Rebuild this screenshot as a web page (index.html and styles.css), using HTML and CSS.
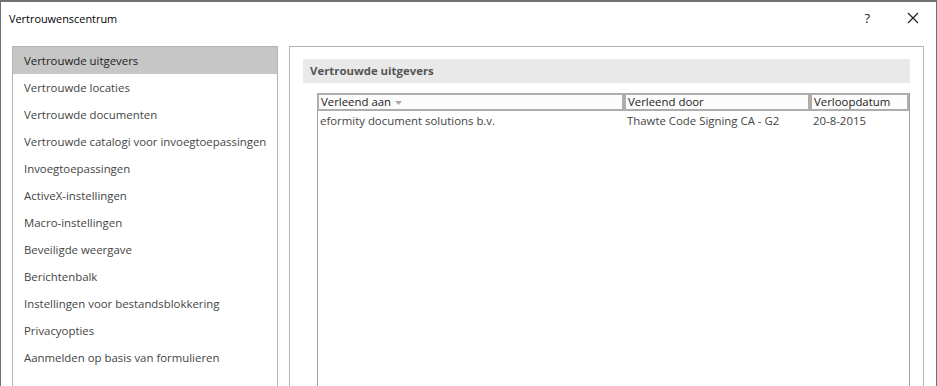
FILE: index.html
```html
<!DOCTYPE html>
<html lang="nl">
<head>
<meta charset="utf-8">
<title>Vertrouwenscentrum</title>
<link rel="stylesheet" href="styles.css">
</head>
<body>
<div class="dialog">
  <div class="titlebar">
    <span class="title">Vertrouwenscentrum</span>
    <span class="help">?</span>
    <span class="close"><svg width="12" height="12" viewBox="0 0 12 12"><path d="M1 1 L11 11 M11 1 L1 11" stroke="#1a1a1a" stroke-width="1.1" fill="none"/></svg></span>
  </div>
  <div class="content">
    <ul class="nav">
      <li class="nav-item selected">Vertrouwde uitgevers</li>
      <li class="nav-item">Vertrouwde locaties</li>
      <li class="nav-item">Vertrouwde documenten</li>
      <li class="nav-item">Vertrouwde catalogi voor invoegtoepassingen</li>
      <li class="nav-item">Invoegtoepassingen</li>
      <li class="nav-item">ActiveX-instellingen</li>
      <li class="nav-item">Macro-instellingen</li>
      <li class="nav-item">Beveiligde weergave</li>
      <li class="nav-item">Berichtenbalk</li>
      <li class="nav-item">Instellingen voor bestandsblokkering</li>
      <li class="nav-item">Privacyopties</li>
      <li class="nav-item">Aanmelden op basis van formulieren</li>
    </ul>
    <div class="panel">
      <div class="section-head">Vertrouwde uitgevers</div>
      <div class="list">
        <div class="list-head">
          <div class="hcell">Verleend aan <svg class="sort" width="7" height="4" viewBox="0 0 7 4"><path d="M0 0 H7 L3.5 4 Z" fill="#a9a9a9"/></svg></div>
          <div class="hcell">Verleend door</div>
          <div class="hcell">Verloopdatum</div>
        </div>
        <div class="list-row">
          <div class="cell">eformity document solutions b.v.</div>
          <div class="cell">Thawte Code Signing CA - G2</div>
          <div class="cell">20-8-2015</div>
        </div>
      </div>
    </div>
  </div>
</div>
</body>
</html>
```
FILE: styles.css
```css
* { box-sizing: border-box; }
html, body { margin: 0; padding: 0; }
body {
  background: #707070;
  font-family: "Open Sans", "Liberation Sans", sans-serif;
  font-size: 11.4px;
  width: 937px;
  height: 386px;
  overflow: hidden;
}
.dialog {
  margin: 2px 1px 0 1px;
  height: 384px;
  background: #ffffff;
  display: flex;
  flex-direction: column;
  overflow: hidden;
}
.titlebar {
  height: 32px;
  flex: 0 0 32px;
  display: flex;
  align-items: center;
  padding-left: 8px;
  color: #000;
}
.title { font-size: 10.9px; }
.help {
  margin-left: auto;
  font-size: 13px;
  color: #1a1a1a;
  margin-right: 37px;
}
.close {
  display: flex;
  margin-right: 17px;
}
.content {
  flex: 1;
  display: flex;
  gap: 11px;
  padding: 12px 11px 0 11px;
}
.nav {
  list-style: none;
  margin: 0;
  padding: 0;
  width: 266px;
  flex: 0 0 266px;
  border: 1px solid #b5b5b5;
  border-bottom: none;
}
.nav-item {
  height: 27px;
  line-height: 27px;
  padding-left: 11px;
  color: #444;
  white-space: nowrap;
}
.nav-item.selected { background: #c6c6c6; color: #222; }
.panel {
  width: 635px;
  flex: 0 0 635px;
  border: 1px solid #b5b5b5;
  border-bottom: none;
  padding: 12px 13px 0 13px;
  display: flex;
  flex-direction: column;
}
.section-head {
  height: 24px;
  line-height: 24px;
  background: #e9e9e9;
  padding-left: 7px;
  font-weight: bold;
  color: #555;
}
.list {
  flex: 1;
  margin: 10px 0 0 14px;
  border-left: 1px solid #a0a0a0;
  border-right: 1px solid #a0a0a0;
}
.list-head, .list-row {
  display: grid;
  grid-template-columns: 303px 182px 1fr;
  column-gap: 4px;
}
.list-head {
  background: #adadad;
  padding: 2px;
  margin-left: -1px;
}
.hcell {
  background: #fcfcfc;
  height: 14px;
  line-height: 14px;
  padding-left: 2px;
  color: #222;
  white-space: nowrap;
  display: flex;
  align-items: center;
  gap: 4px;
}
.sort { margin-top: 1px; }
.list-row { padding: 0 2px 0 1px; }
.cell {
  height: 20px;
  line-height: 20px;
  padding-left: 1px;
  color: #444;
  white-space: nowrap;
}
```
